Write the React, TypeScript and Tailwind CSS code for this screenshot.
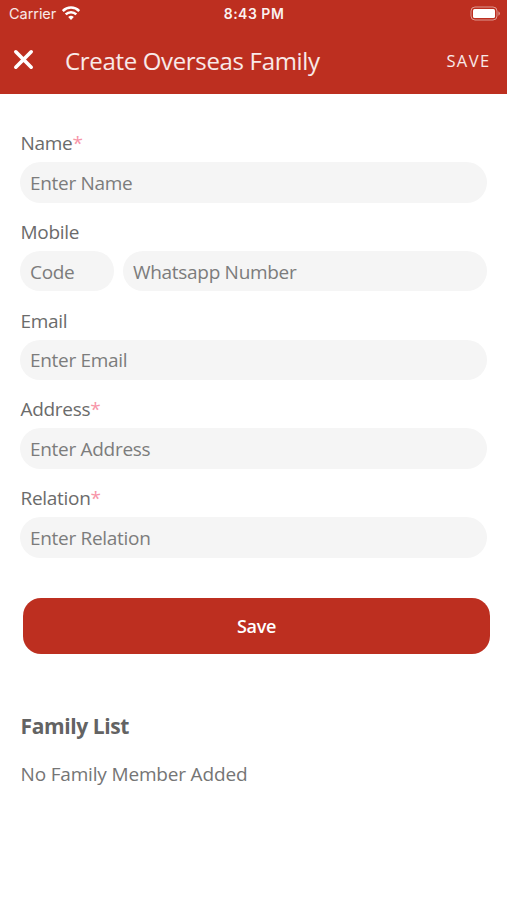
import clsx from 'clsx';

const DETAIL_FIELDS = [
  { label: 'Email', placeholder: 'Enter Email', required: false },
  { label: 'Address', placeholder: 'Enter Address', required: true },
  { label: 'Relation', placeholder: 'Enter Relation', required: true },
];

interface FieldProps {
  label: string;
  required?: boolean;
  children: React.ReactNode;
}

function Field({ label, required, children }: FieldProps) {
  return (
    <div className="flex h-[88.8px] flex-col">
      <div className="h-[32px] pl-[0.5px] text-[19px] leading-[27.8px] tracking-[-0.3px] text-[#6b6b6b]">
        {label}
        {required && <span className="text-[#f795a8]">*</span>}
      </div>
      {children}
    </div>
  );
}

interface InputProps {
  placeholder: string;
  className?: string;
}

function Input({ placeholder, className }: InputProps) {
  return (
    <input
      placeholder={placeholder}
      className={clsx(
        'block h-[40.5px] min-w-0 rounded-full bg-[#f5f5f5] px-[10px] pb-px pt-[2px] text-[19px] tracking-[-0.3px] text-[#6b6b6b] outline-none placeholder:text-[#7c7c7c]',
        className
      )}
    />
  );
}

function WifiIcon() {
  return (
    <svg width="18" height="14" viewBox="0 0 18 14" fill="none" stroke="white" strokeWidth="2.5" className="mb-[2px]">
      <path d="M0.8 5a11.6 11.6 0 0 1 16.4 0M3.7 8.4a7.5 7.5 0 0 1 10.6 0" />
      <path d="M9 14 6.2 11a4 4 0 0 1 5.6 0Z" fill="white" stroke="none" />
    </svg>
  );
}

function BatteryIcon() {
  return (
    <svg width="31" height="15" viewBox="0 0 31 15" fill="none" className="mb-[2px]">
      <rect x="1" y="1" width="26" height="13" rx="4" stroke="white" strokeOpacity="0.5" />
      <rect x="3" y="3" width="22" height="9" rx="1.5" fill="white" />
      <path d="M28.5 5.2v4.6a2.7 2.7 0 0 0 0-4.6Z" fill="white" fillOpacity="0.6" />
    </svg>
  );
}

export default function App() {
  return (
    <div className="min-h-[900px] w-[507px] bg-white font-['Open_Sans','Noto_Sans',sans-serif]">
      <header className="h-[93.5px] bg-[#bd2f20] text-white">
        {/* Status bar */}
        <div className="grid h-[28px] grid-cols-3 items-center pl-[9px] pr-[6px] font-['Inter',sans-serif] text-[14px]">
          <div className="flex items-center gap-[6px]">
            <span className="text-[14.5px] tracking-[-0.05px] text-white/90">Carrier</span>
            <WifiIcon />
          </div>
          <span className="-ml-[2px] pb-[2px] text-center text-[14px] font-semibold tracking-[0.5px] text-white/95">
            8:43 PM
          </span>
          <div className="flex justify-end">
            <BatteryIcon />
          </div>
        </div>

        {/* Title bar */}
        <div className="flex h-[65px] items-center pl-[13px] pr-[16.5px]">
          <svg
            width="21"
            height="21"
            viewBox="0 0 21 21"
            stroke="white"
            strokeWidth="3.6"
            strokeLinecap="round"
            className="mb-[2px]"
          >
            <path d="M2.8 2.8 18.2 18.2M18.2 2.8 2.8 18.2" />
          </svg>
          <h1 className="ml-[31px] flex-1 text-[24px] leading-[32px] tracking-[-0.33px] text-white/90">
            Create Overseas Family
          </h1>
          <button className="pt-[2px] text-[16.5px] tracking-[1.4px] text-white/90">SAVE</button>
        </div>
      </header>

      <main className="px-[20px] pt-[36.5px]">
        <Field label="Name" required>
          <Input placeholder="Enter Name" className="w-full" />
        </Field>
        <Field label="Mobile">
          <div className="flex gap-[9px]">
            <Input placeholder="Code" className="w-[94px]" />
            <Input placeholder="Whatsapp Number" className="flex-1" />
          </div>
        </Field>
        {DETAIL_FIELDS.map((field) => (
          <Field key={field.label} label={field.label} required={field.required}>
            <Input placeholder={field.placeholder} className="w-full" />
          </Field>
        ))}

        <button className="ml-[3px] mt-[24px] block h-[56px] w-[467px] rounded-[18px] bg-[#bd2f20] pt-[2px] text-[18px] font-semibold tracking-[-0.3px] text-white">
          Save
        </button>

        <h2 className="mt-[57px] pl-[0.5px] text-[21px] font-bold leading-[30px] tracking-[-0.4px] text-[#636363]">
          Family List
        </h2>
        <p className="mt-[19px] pl-[0.5px] text-[19px] leading-[28px] tracking-[-0.17px] text-[#757575]">
          No Family Member Added
        </p>
      </main>
    </div>
  );
}
